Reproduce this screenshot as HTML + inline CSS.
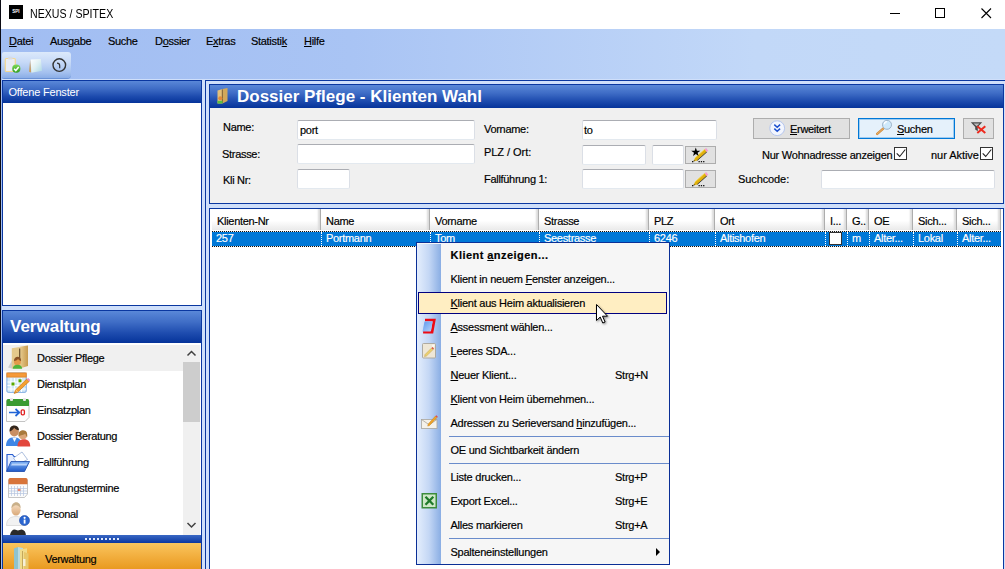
<!DOCTYPE html>
<html lang="de">
<head>
<meta charset="utf-8">
<title>NEXUS / SPITEX</title>
<style>
*{box-sizing:border-box;margin:0;padding:0}
html,body{width:1005px;height:569px;overflow:hidden;background:#fff}
body{position:relative;font-family:"Liberation Sans",sans-serif;font-size:11px;color:#000;letter-spacing:-0.3px;-webkit-text-stroke:0.18px currentColor}
.a{position:absolute}
u{text-decoration:underline;text-underline-offset:1px}
/* window chrome */
#edge{left:0;top:0;width:1px;height:569px;background:#0b0b14}
#titlebar{left:1px;top:0;width:1004px;height:29px;background:#fff}
#appicon{left:9px;top:5px;width:14px;height:14px;background:#000;color:#fff;-webkit-text-stroke:0;font-size:4.5px;font-weight:bold;line-height:14px;text-align:center;letter-spacing:0}
#title{left:30px;top:6px;font-size:12px;line-height:16px;letter-spacing:0;white-space:nowrap;transform-origin:0 0;transform:scaleX(0.885);-webkit-text-stroke:0}
#chromebg{left:1px;top:29px;width:1004px;height:540px;background:linear-gradient(90deg,#a1bdf2 0%,#a9c4f4 35%,#c2d8f8 75%,#c4daf8 100%)}
.mi{top:34px;font-size:11px;line-height:14px;white-space:nowrap}
#tbar{left:2px;top:52px;width:69px;height:26px;border-radius:2px 3px 4px 2px;background:linear-gradient(180deg,#dce9fb 0%,#c6d9f7 40%,#a3c0ee 80%,#8aade6 100%);box-shadow:0 1px 0 #6a92d6}
/* panels */
.dk{background:#0a37a0}
.hdr{background:linear-gradient(180deg,#5a88d8 0%,#3f6dc6 35%,#1d4bae 70%,#05339a 100%)}
.inp{background:#fff;border:1px solid #dbdfe6;border-top-color:#abadb3;border-bottom-color:#e3e9ef;border-radius:2px;height:20px}
.lbl{font-size:11px;line-height:14px;white-space:nowrap}
.btn{background:#e1e1e1;border:1px solid #adadad}
.cb{width:13px;height:13px;background:#fff;border:1px solid #333}
/* grid */
.ch{top:209px;height:21px;border-right:1px solid #adadad;background:linear-gradient(180deg,#fff 0%,#fff 55%,#eaeaea 100%);font-size:11px;line-height:24px;padding-left:5px;white-space:nowrap;overflow:hidden;box-shadow:inset -3px 0 2px -1px #dcdcdc,1px 0 0 #fff}
.cc{top:232px;height:14px;font-size:11px;line-height:13px;color:#fff;padding-left:4px;white-space:nowrap;overflow:hidden;border-left:1px dotted #fff}
/* nav list */
.ni{left:37px;font-size:11px;line-height:14px;white-space:nowrap}
/* context menu */
#menu{left:416px;top:242px;width:254px;height:323px;background:#f6f6f6;border:1px solid #0a2f96}
#strip{left:0px;top:1px;width:24px;height:320px;background:linear-gradient(90deg,#e4eefd 0%,#c4d7f5 50%,#8aaee4 100%)}
.m{left:33.5px;font-size:11px;line-height:14px;white-space:nowrap;letter-spacing:-0.25px}
.sc{left:198px;font-size:11px;line-height:14px;white-space:nowrap;letter-spacing:-0.25px}
.sep{left:32px;width:220px;height:1px;background:#6a8ccb}
</style>
</head>
<body>
<div class="a" id="edge"></div>
<div class="a" id="titlebar"></div>
<div class="a" id="appicon">SPI</div>
<div class="a" id="title">NEXUS / SPITEX</div>
<svg class="a" style="left:885px;top:3px" width="115" height="22" viewBox="0 0 115 22">
<path d="M5 10.5h10" stroke="#000" stroke-width="1" fill="none"/>
<rect x="50.5" y="5.5" width="9" height="9" stroke="#000" stroke-width="1" fill="none"/>
<path d="M96.500 5.500l9.500 9.500M106 5.500l-9.500 9.500" stroke="#000" stroke-width="1.1" fill="none"/>
</svg>
<div class="a" id="chromebg"></div>

<!-- menu bar -->
<div class="a mi" style="left:9px"><u>D</u>atei</div>
<div class="a mi" style="left:50px">Ausgabe</div>
<div class="a mi" style="left:108px">Suche</div>
<div class="a mi" style="left:155px">D<u>o</u>ssier</div>
<div class="a mi" style="left:206px">E<u>x</u>tras</div>
<div class="a mi" style="left:251px">Statisti<u>k</u></div>
<div class="a mi" style="left:304px"><u>H</u>ilfe</div>

<!-- toolbar -->
<div class="a" id="tbar"></div>


<!-- toolbar icons -->
<svg class="a" style="left:2px;top:52px" width="70" height="27" viewBox="0 0 70 27">
<defs>
<linearGradient id="gck" x1="0" y1="0" x2="0" y2="1"><stop offset="0" stop-color="#7ed957"/><stop offset="1" stop-color="#2f9e1f"/></linearGradient>
<linearGradient id="gnt" x1="0" y1="0" x2="1" y2="1"><stop offset="0" stop-color="#ffffff"/><stop offset="0.5" stop-color="#dff0f2"/><stop offset="1" stop-color="#a9d6e4"/></linearGradient>
</defs>
<rect x="3.300" y="6.500" width="10" height="13" rx="1" fill="#e9ecf3" stroke="#f3d893" stroke-width="1.200"/>
<rect x="6" y="4.800" width="4.600" height="2.600" rx="1" fill="#d9dbe0"/>
<circle cx="14.300" cy="16.700" r="4.100" fill="url(#gck)"/>
<path d="M12.100 16.700l1.700 1.800 2.900-3.500" stroke="#fff" stroke-width="1.500" fill="none"/>
<path d="M28.200 7.600l-1.200 12.200 2.200.6z" fill="#c9a065"/>
<path d="M28.600 7.400l10.200-.4 1.300 11.700-10.700 2z" fill="url(#gnt)"/>
<circle cx="57.300" cy="13.100" r="6.300" fill="none" stroke="#333" stroke-width="1.400"/>
<path d="M55 11.200c1.800 0 2.700 1 2.700 2.600v2.400" stroke="#333" stroke-width="1.200" fill="none"/>
</svg>

<div class="a" style="left:2px;top:79px;width:1003px;height:490px;background:#cfdffa"></div>
<!-- left top panel -->
<div class="a dk" style="left:2px;top:80px;width:200px;height:226px"></div>
<div class="a hdr" style="left:3px;top:81px;width:198px;height:22px"></div>
<div class="a" style="left:3px;top:103px;width:198px;height:202px;background:#fff"></div>
<div class="a lbl" style="left:8.500px;top:85px;color:#fff;letter-spacing:-0.2px;-webkit-text-stroke:0">Offene Fenster</div>

<!-- left bottom panel -->
<div class="a dk" style="left:2px;top:310px;width:200px;height:259px"></div>
<div class="a hdr" style="left:3px;top:311px;width:198px;height:32px"></div>
<div class="a" style="left:10px;top:317px;color:#fff;font-weight:bold;font-size:17px;line-height:20px;letter-spacing:0;-webkit-text-stroke:0;white-space:nowrap">Verwaltung</div>
<div class="a" style="left:3px;top:343px;width:198px;height:192px;background:#fff"></div>
<div class="a" style="left:3px;top:345px;width:180px;height:26px;background:#f0f0f0"></div>
<div class="a" style="left:183px;top:345px;width:17px;height:190px;background:#f0f0f0"></div>
<div class="a" style="left:183px;top:362px;width:17px;height:60px;background:#cdcdcd"></div>
<div class="a ni" style="top:351px">Dossier Pflege</div>
<div class="a ni" style="top:377px">Dienstplan</div>
<div class="a ni" style="top:403px">Einsatzplan</div>
<div class="a ni" style="top:429px">Dossier Beratung</div>
<div class="a ni" style="top:455px">Fallführung</div>
<div class="a ni" style="top:481px">Beratungstermine</div>
<div class="a ni" style="top:507px">Personal</div>
<div class="a" style="left:3px;top:535px;width:198px;height:8px;background:linear-gradient(180deg,#3a68c4,#0a37a0)"></div>
<div class="a" style="left:3px;top:543px;width:198px;height:26px;background:linear-gradient(180deg,#f9c65e 0%,#f3b142 45%,#e99a20 100%)"></div>
<div class="a lbl" style="left:45px;top:552px">Verwaltung</div>


<!-- nav icons -->
<svg class="a" style="left:3px;top:343px" width="34" height="192" viewBox="3 343 34 192">
<defs>
<linearGradient id="gtan" x1="0" y1="0" x2="1" y2="0"><stop offset="0" stop-color="#e8cd92"/><stop offset="1" stop-color="#c79a4e"/></linearGradient>
<linearGradient id="gfold" x1="0" y1="0" x2="0" y2="1"><stop offset="0" stop-color="#7fb2f5"/><stop offset="1" stop-color="#1e58c8"/></linearGradient>
<linearGradient id="gskin" x1="0" y1="0" x2="0" y2="1"><stop offset="0" stop-color="#f6dcc0"/><stop offset="1" stop-color="#d9a878"/></linearGradient>
</defs>
<!-- 1 dossier pflege -->
<path d="M8 367.500l4-7v8z" fill="#bdbdbd" opacity="0.700"/>
<path d="M11.800 348.200l7.900-1.200v21.500h-7.900z" fill="#e4c98c"/>
<path d="M19.700 346.800l8.300-1.400v20.600l-8.300 2.500z" fill="url(#gtan)"/>
<path d="M19.700 348.500v12" stroke="#5a4020" stroke-width="1.100"/>
<circle cx="17.400" cy="361.800" r="3.500" fill="#e39a4a"/>
<path d="M13.900 361c.2-3 2-4.300 3.700-4.300 1.900 0 3.500 1.400 3.500 4.200-1.200-.3-2.300-1-3-2-1 1.200-2.500 1.900-4.200 2.100z" fill="#8a5226"/>
<path d="M12.700 368.800c.2-2.700 2-4 4.800-4s4.500 1.300 4.700 4z" fill="#4fb43a"/>
<!-- 2 dienstplan -->
<rect x="6.900" y="373" width="19.300" height="19.300" rx="1.200" fill="#d4eaf8" stroke="#7aa8e0" stroke-width="1"/>
<rect x="6.900" y="373" width="19.300" height="4" fill="#f59a3a" stroke="#e8892a" stroke-width="1"/>
<path d="M11 378v14M14.500 378v14M18 378v14M21.500 378v14M7.500 382h18.500M7.500 385.500h18.500M7.500 389h18.500" stroke="#fff" stroke-width="1"/>
<rect x="11.500" y="382.500" width="3" height="3" fill="#5aa800"/><rect x="18.500" y="379.300" width="3" height="3" fill="#5aa800"/>
<path d="M26.800 379l2.400 2.400-11.600 10.800-3.400 1.400 1.200-3.500z" fill="#f5a030" stroke="#c0700e" stroke-width="0.600"/>
<path d="M26.800 379l2.400 2.400 1-1.300-2-2z" fill="#e58ac8"/>
<path d="M16 390.200l1.600 1.800" stroke="#fbe0b0" stroke-width="0.800"/>
<!-- 3 einsatzplan -->
<path d="M6.500 401h22.500v16.500l-4 4h-18.500z" fill="#fdfdfd" stroke="#b5b5b5" stroke-width="0.800"/>
<path d="M6.500 400.500a1.500 1.500 0 0 1 1.500-1.500h19.500a1.500 1.500 0 0 1 1.500 1.500v5.500h-22.500z" fill="#3a9a32"/>
<rect x="10" y="398" width="3" height="3" rx="1" fill="#e6e6e6"/><rect x="23" y="398" width="3" height="3" rx="1" fill="#e6e6e6"/>
<path d="M9 412.500h9.500M15.500 409l3.800 3.500-3.800 3.500" stroke="#1f63d6" stroke-width="1.700" fill="none"/>
<rect x="21.200" y="409.800" width="3.200" height="5" rx="1.300" fill="none" stroke="#e02020" stroke-width="1.300"/>
<!-- 4 dossier beratung -->
<path d="M6 446c0-6 3-8.800 8-8.800s8 2.800 8 8.800z" fill="#3f86e6"/>
<path d="M12.300 437.500l2.200 4.500 2.200-4.500z" fill="#f4f6fa"/>
<circle cx="14.300" cy="431.800" r="4.600" fill="#c98f62"/>
<path d="M9.600 431.500c-.4-4.300 2.200-6.300 5.200-6 2.600.2 4.300 2 4.200 4.800-2.200-.2-3.800-1.200-4.800-2.600-1 1.800-2.600 3.200-4.600 3.800z" fill="#33261c"/>
<path d="M17.500 446.500c0-5 2.300-7.300 6.300-7.300s6.400 2.300 6.400 7.300z" fill="#e2473d"/>
<circle cx="22.900" cy="435.200" r="4.100" fill="#dba678"/>
<path d="M18.600 436.500c-.7-4.200 1.600-6.400 4.600-6.300 3 .1 4.600 2.600 4 6.800-.9-.4-1.500-1.800-1.800-3.200-1.700 1-4.500 1.400-6.800 2.700z" fill="#a87a3c"/>
<!-- 5 fallfuehrung -->
<path d="M7 454.500h5.500l1.500 2h9.500v14h-16.500z" fill="#e4edff" stroke="#2a5ed0" stroke-width="1.200"/>
<path d="M13.500 458l8.500-6 5.500 7.500-9.500 5z" fill="#fff" stroke="#8aa4d0" stroke-width="0.700"/>
<path d="M11 461.500h18.500l-5 10h-18z" fill="url(#gfold)" stroke="#1846a8" stroke-width="0.800"/>
<path d="M12 463.500h15.500l-1 2h-15.500z" fill="#cfe2ff" opacity="0.800"/>
<!-- 6 beratungstermine -->
<path d="M8.500 480h19v14l-3 3.500h-16z" fill="#fbfbfb" stroke="#b8b8b8" stroke-width="0.800"/>
<path d="M8.500 479.500a1.500 1.500 0 0 1 1.500-1.500h16a1.500 1.500 0 0 1 1.500 1.500v4.800h-19z" fill="#d8743a"/>
<path d="M11.500 486v10M14.500 486v10M17.500 486v10M20.500 486v10M23.500 486v10M9 488.500h18M9 491h18M9 493.500h18" stroke="#b4c4e0" stroke-width="0.700"/>
<rect x="17.800" y="488.800" width="2.600" height="2.200" fill="#f08a70"/>
<!-- 7 personal -->
<path d="M6.500 525.500c0-6 3.500-9 9.500-9s9.500 3 9.500 9z" fill="#f2f2f2" stroke="#cfcfcf" stroke-width="0.600"/>
<ellipse cx="16" cy="510" rx="4.600" ry="5.600" fill="url(#gskin)"/>
<path d="M11.400 508.500c0-4 2.200-6.200 4.800-6.200 2.700 0 4.600 2.200 4.500 6-1.500-1.800-3-3-4.700-3-1.800 0-3.300 1.300-4.600 3.200z" fill="#c9b08a"/>
<circle cx="24.500" cy="520.500" r="5" fill="#2b66d0" stroke="#1a48a8" stroke-width="0.600"/>
<rect x="23.700" y="519.600" width="1.800" height="4" fill="#fff"/><circle cx="24.600" cy="517.800" r="1.100" fill="#fff"/>
<!-- 8 partial -->
<path d="M10 535c.5-3.500 2.600-5.500 4.600-5.500 1.500 0 2 1 3.400 1s2.400-1.200 3.900-.9c2.400.5 3.900 2.600 4 5.400z" fill="#2a2a2a"/>
</svg>
<!-- scrollbar arrows -->
<svg class="a" style="left:183px;top:345px" width="17" height="190" viewBox="0 0 17 190">
<path d="M4.500 10.500l4-4 4 4" stroke="#404040" stroke-width="1.500" fill="none"/>
<path d="M4.500 178l4 4 4-4" stroke="#404040" stroke-width="1.500" fill="none"/>
</svg>
<!-- splitter dots -->
<svg class="a" style="left:84px;top:537px" width="36" height="4" viewBox="0 0 36 4">
<g fill="#dfe9fb"><rect x="1" y="1" width="2" height="2"/><rect x="5" y="1" width="2" height="2"/><rect x="9" y="1" width="2" height="2"/><rect x="13" y="1" width="2" height="2"/><rect x="17" y="1" width="2" height="2"/><rect x="21" y="1" width="2" height="2"/><rect x="25" y="1" width="2" height="2"/><rect x="29" y="1" width="2" height="2"/><rect x="33" y="1" width="2" height="2"/></g>
</svg>


<!-- orange button icon -->
<svg class="a" style="left:12px;top:545px" width="20" height="24" viewBox="12 545 20 24">
<path d="M14 548.500l4-1.500v22h-4z" fill="#8fc3cf"/>
<path d="M18 547l5 1v21h-5z" fill="#b9dbe0"/>
<path d="M20 549.500l7-1.200v20.700h-7z" fill="#f1dc8c"/>
<path d="M22.500 551v18" stroke="#b89a50" stroke-width="0.800"/>
<path d="M24 552l4.500 1.500v15.500h-4.500z" fill="#e8c76a"/>
<rect x="23" y="559" width="2.500" height="7" fill="#f6f0d8"/>
</svg>

<!-- main frame -->
<div class="a dk" style="left:205px;top:80px;width:800px;height:1px"></div>
<div class="a dk" style="left:205px;top:80px;width:1px;height:489px"></div>
<!-- main top panel -->
<div class="a dk" style="left:209px;top:84px;width:795px;height:120px"></div>
<div class="a hdr" style="left:210px;top:85px;width:793px;height:23px"></div>
<div class="a" style="left:210px;top:108px;width:793px;height:95px;background:#f0f0f0"></div>
<div class="a" style="left:237px;top:87px;color:#fff;font-weight:bold;font-size:17px;line-height:20px;letter-spacing:0;-webkit-text-stroke:0;white-space:nowrap">Dossier Pflege - Klienten Wahl</div>

<div class="a lbl" style="left:223px;top:120px">Name:</div>
<div class="a lbl" style="left:222px;top:147px">Strasse:</div>
<div class="a lbl" style="left:223px;top:173px">Kli Nr:</div>
<div class="a inp" style="left:297px;top:120px;width:178px"></div>
<div class="a inp" style="left:297px;top:144px;width:178px"></div>
<div class="a inp" style="left:297px;top:169px;width:53px"></div>
<div class="a lbl" style="left:300px;top:123px">port</div>

<div class="a lbl" style="left:484px;top:122px">Vorname:</div>
<div class="a lbl" style="left:484px;top:145px;letter-spacing:-0.05px">PLZ / Ort:</div>
<div class="a lbl" style="left:484px;top:172px">Fallführung 1:</div>
<div class="a inp" style="left:582px;top:120px;width:135px"></div>
<div class="a inp" style="left:582px;top:145px;width:64px"></div>
<div class="a inp" style="left:652px;top:145px;width:32px"></div>
<div class="a inp" style="left:582px;top:169px;width:102px"></div>
<div class="a lbl" style="left:584px;top:123px">to</div>
<div class="a btn" style="left:685px;top:146px;width:31px;height:18px"></div>
<div class="a btn" style="left:685px;top:170px;width:31px;height:18px"></div>

<div class="a btn" style="left:753px;top:118px;width:97px;height:21px"></div>
<div class="a lbl" style="left:790px;top:122px"><u>E</u>rweitert</div>
<div class="a" style="left:858px;top:118px;width:97px;height:21px;background:#e5f1fb;border:1px solid #0078d7;box-shadow:inset 0 0 0 1px rgba(0,120,215,0.300)"></div>
<div class="a lbl" style="left:897px;top:122px"><u>S</u>uchen</div>
<div class="a btn" style="left:963px;top:118px;width:31px;height:21px"></div>

<div class="a lbl" style="left:762px;top:148px;letter-spacing:-0.24px">Nur Wohnadresse anzeigen</div>
<div class="a cb" style="left:894px;top:147px"></div>
<div class="a lbl" style="left:931px;top:148px;letter-spacing:-0.05px">nur Aktive</div>
<div class="a cb" style="left:980px;top:147px"></div>
<div class="a lbl" style="left:738px;top:172px;letter-spacing:-0.1px">Suchcode:</div>
<div class="a inp" style="left:821px;top:170px;width:174px;height:19px"></div>


<!-- header icon -->
<svg class="a" style="left:215px;top:87px" width="16" height="18" viewBox="215 87 16 18">
<path d="M217.500 90.500l5-1.500v14.500h-5z" fill="#e3c07a"/>
<path d="M222.500 89l5-1v13l-5 2.500z" fill="#d2a85a"/>
<path d="M222.300 89.500v13.500" stroke="#7a5a28" stroke-width="0.900"/>
<circle cx="220.300" cy="98.300" r="2" fill="#e28a3a"/>
<rect x="217.500" y="100.800" width="5" height="2.700" fill="#5cc040"/>
</svg>
<!-- form button icons -->
<svg class="a" style="left:685px;top:146px" width="31" height="42" viewBox="685 146 31 42">
<defs><linearGradient id="gpen" x1="0" y1="0" x2="1" y2="1"><stop offset="0" stop-color="#f6cc1a"/><stop offset="1" stop-color="#c99400"/></linearGradient></defs>
<g>
<path d="M704.700 149.300L706.900 151.900L697.300 160.400L693.400 161.600L695.100 157.800z" fill="url(#gpen)"/>
<path d="M706.900 151.900L697.300 160.400" stroke="#4a4a4a" stroke-width="1"/>
<path d="M704.700 149.300L695.100 157.800" stroke="#f8dc50" stroke-width="0.800"/>
<path d="M704.700 149.300L706.900 151.900L708.300 150.700L706.100 148.100z" fill="#f59ad0"/>
<path d="M693.400 161.600l.6-1.500 1 .9z" fill="#333"/>
<g fill="#111"><rect x="692" y="161" width="1.300" height="1.300"/><rect x="698.500" y="161" width="1.300" height="1.300"/><rect x="700.800" y="161" width="1.300" height="1.300"/><rect x="703.100" y="161" width="1.300" height="1.300"/></g>
</g>
<g transform="translate(0,24)">
<path d="M704.700 149.300L706.900 151.900L697.300 160.400L693.400 161.600L695.100 157.800z" fill="url(#gpen)"/>
<path d="M706.900 151.900L697.300 160.400" stroke="#4a4a4a" stroke-width="1"/>
<path d="M704.700 149.300L695.100 157.800" stroke="#f8dc50" stroke-width="0.800"/>
<path d="M704.700 149.300L706.900 151.900L708.300 150.700L706.100 148.100z" fill="#f59ad0"/>
<path d="M693.400 161.600l.6-1.500 1 .9z" fill="#333"/>
<g fill="#111"><rect x="692" y="161" width="1.300" height="1.300"/><rect x="698.500" y="161" width="1.300" height="1.300"/><rect x="700.800" y="161" width="1.300" height="1.300"/><rect x="703.100" y="161" width="1.300" height="1.300"/></g>
</g>
<path d="M695.8 147.4 L696.9 150.7 L700.4 150.7 L697.6 152.8 L698.6 156.1 L695.8 154.1 L693.0 156.1 L694.0 152.8 L691.2 150.7 L694.7 150.7z" fill="#000"/>
</svg>
<svg class="a" style="left:753px;top:118px" width="242" height="21" viewBox="753 118 242 21">
<circle cx="777.200" cy="128.200" r="7.400" fill="#f3f6fe" stroke="#b5c6ee" stroke-width="1"/>
<path d="M774.300 124.600l2.900 2.700 2.900-2.700M774.300 128.600l2.900 2.700 2.900-2.700" stroke="#1c50d0" stroke-width="1.500" fill="none"/>
<path d="M883.500 128.300l-6.300 5.600" stroke="#d08a3a" stroke-width="2.400" stroke-linecap="round"/>
<path d="M883.500 128.300l-6.300 5.600" stroke="#f0c080" stroke-width="0.800" stroke-linecap="round"/>
<circle cx="887" cy="124.800" r="4.500" fill="#cfe9fb" stroke="#9fb4c8" stroke-width="1"/>
<path d="M884.300 124.200a2.800 2.800 0 0 1 2.800-2.500" stroke="#fff" stroke-width="1.300" fill="none"/>
<path d="M970.800 122.300h11.400l-4.400 4.600v4.300l-2.600-1.600v-2.700z" fill="#4a4a4a"/>
<path d="M973.500 123.600h6l-2.800 2.600z" fill="#bdbdbd"/>
<path d="M977.300 126.300l8 6.800M985.300 126.300l-8 6.800" stroke="#ee2a1e" stroke-width="2"/>
</svg>
<!-- check marks -->
<svg class="a" style="left:894px;top:147px" width="100" height="13" viewBox="894 147 100 13">
<path d="M896.700 153.300l3 3.200 5.600-7" stroke="#222" stroke-width="1.100" fill="none"/>
<path d="M982.700 153.300l3 3.200 5.600-7" stroke="#222" stroke-width="1.100" fill="none"/>
</svg>

<!-- grid -->
<div class="a dk" style="left:209px;top:208px;width:795px;height:361px"></div>
<div class="a" style="left:210px;top:209px;width:793px;height:360px;background:#fff"></div>
<div class="a ch" style="left:212px;width:109px">Klienten-Nr</div>
<div class="a ch" style="left:321px;width:109px">Name</div>
<div class="a ch" style="left:430px;width:109px">Vorname</div>
<div class="a ch" style="left:539px;width:110px">Strasse</div>
<div class="a ch" style="left:649px;width:66px">PLZ</div>
<div class="a ch" style="left:715px;width:110px">Ort</div>
<div class="a ch" style="left:825px;width:22px">I...</div>
<div class="a ch" style="left:847px;width:22px">G..</div>
<div class="a ch" style="left:869px;width:44px">OE</div>
<div class="a ch" style="left:913px;width:44px">Sich...</div>
<div class="a ch" style="left:957px;width:44px">Sich...</div>
<div class="a" style="left:212px;top:231px;width:789px;height:16px;background:#0078d7"></div>
<div class="a" style="left:212px;top:231px;width:789px;height:1px;background:repeating-linear-gradient(90deg,#111 0 1px,#e8e8e8 1px 2px)"></div>
<div class="a" style="left:212px;top:246px;width:789px;height:1px;background:repeating-linear-gradient(90deg,#111 0 1px,#e8e8e8 1px 2px)"></div>
<div class="a cc" style="left:212px;width:109px;border-left:none">257</div>
<div class="a cc" style="left:321px;width:109px">Portmann</div>
<div class="a cc" style="left:430px;width:109px">Tom</div>
<div class="a cc" style="left:539px;width:110px">Seestrasse</div>
<div class="a cc" style="left:649px;width:66px">6246</div>
<div class="a cc" style="left:715px;width:110px">Altishofen</div>
<div class="a cc" style="left:825px;width:22px"></div>
<div class="a" style="left:829px;top:232px;width:13px;height:13px;background:#fff;border:1px solid #333"></div>
<div class="a cc" style="left:847px;width:22px">m</div>
<div class="a cc" style="left:869px;width:44px">Alter...</div>
<div class="a cc" style="left:913px;width:44px">Lokal</div>
<div class="a cc" style="left:957px;width:44px">Alter...</div>

<!-- context menu -->
<div class="a" id="menu">
<div class="a" id="strip"></div>
<div class="a" style="left:1px;top:49px;width:249px;height:22px;background:#ffeec2;border:1px solid #000080"></div>

<!-- menu icons (coords relative to menu box at 417,243) -->
<svg class="a" style="left:0px;top:1px" width="24" height="319" viewBox="417 244 24 319">
<defs>
<linearGradient id="gas" x1="0" y1="0" x2="1" y2="1"><stop offset="0" stop-color="#5f98ee"/><stop offset="1" stop-color="#b4d4fb"/></linearGradient>
</defs>
<path d="M425 320h9.300l-2.200 12.300h-9" fill="none" stroke="#ee0a14" stroke-width="2.600"/>
<path d="M424.500 321.500h8l-1.800 10h-8.200z" fill="url(#gas)"/>
<rect x="422.500" y="343.500" width="13" height="14.500" rx="1" fill="#efe7d6" stroke="#a8a49a" stroke-width="0.900"/>
<circle cx="433.300" cy="345.700" r="1.300" fill="#fbf8f0"/>
<path d="M431.500 348l1.600 1.600-6.600 6.400-2 .6.500-2.100z" fill="#ecd070" stroke="#b89838" stroke-width="0.400"/>
<path d="M431.500 348l1.600 1.600 .9-.9-1.600-1.600z" fill="#e0443c"/>
<rect x="421.500" y="419.500" width="15.500" height="9" fill="#f4f1ea" stroke="#a9a59c" stroke-width="0.800"/>
<path d="M421.500 419.500l7.700 5.300 7.800-5.300" stroke="#a9a59c" stroke-width="0.800" fill="none"/>
<path d="M435.500 416l1.500 1.500-7.500 8-1.800.6.500-2z" fill="#f0a428" stroke="#b87410" stroke-width="0.400"/>
<path d="M435.500 416l1.500 1.500.8-.8-1.500-1.500z" fill="#e03c50"/>
<rect x="421.500" y="493" width="15.500" height="15.500" fill="#3c8c3c"/>
<rect x="423" y="494.500" width="12.500" height="12.500" fill="#cfe8c8"/>
<path d="M425.500 496.800l7.800 8M433.300 496.800l-7.800 8" stroke="#1f7a2a" stroke-width="2.300"/>
</svg>
<div class="a m" style="top:5px;font-weight:bold;letter-spacing:0.45px">Klient <u>a</u>nzeigen...</div>
<div class="a m" style="top:29px">Klient in neuem <u>F</u>enster anzeigen...</div>
<div class="a m" style="top:53px"><u>K</u>lient aus Heim aktualisieren</div>
<div class="a m" style="top:77px"><u>A</u>ssessment wählen...</div>
<div class="a m" style="top:101px"><u>L</u>eeres SDA...</div>
<div class="a m" style="top:125px"><u>N</u>euer Klient...</div>
<div class="a sc" style="top:125px">Strg+N</div>
<div class="a m" style="top:149px"><u>K</u>lient von Heim übernehmen...</div>
<div class="a m" style="top:173px">Adressen zu Serieversand <u>h</u>inzufügen...</div>
<div class="a sep" style="top:193px"></div>
<div class="a m" style="top:200px">OE und Sichtbarkeit ändern</div>
<div class="a sep" style="top:220px"></div>
<div class="a m" style="top:227px">Liste drucken...</div>
<div class="a sc" style="top:227px">Strg+P</div>
<div class="a m" style="top:251px">Export Excel...</div>
<div class="a sc" style="top:251px">Strg+E</div>
<div class="a m" style="top:275px">Alles markieren</div>
<div class="a sc" style="top:275px">Strg+A</div>
<div class="a sep" style="top:295px"></div>
<div class="a m" style="top:302px">Spalteneinstellungen</div>
<svg class="a" style="left:238px;top:304px" width="6" height="10"><path d="M1 1l4 4-4 4z" fill="#000"/></svg>
</div>

<!-- mouse cursor -->
<svg class="a" style="left:595px;top:303px;filter:drop-shadow(1px 1px 1px rgba(0,0,0,0.450));overflow:visible" width="14" height="22" viewBox="0 0 14 22">
<path d="M1.500 1.500v16l3.700-3.500 2.600 6 2.300-1-2.600-5.800h5z" fill="#fff" stroke="#000" stroke-width="1" stroke-linejoin="miter"/>
</svg>
</body>
</html>
